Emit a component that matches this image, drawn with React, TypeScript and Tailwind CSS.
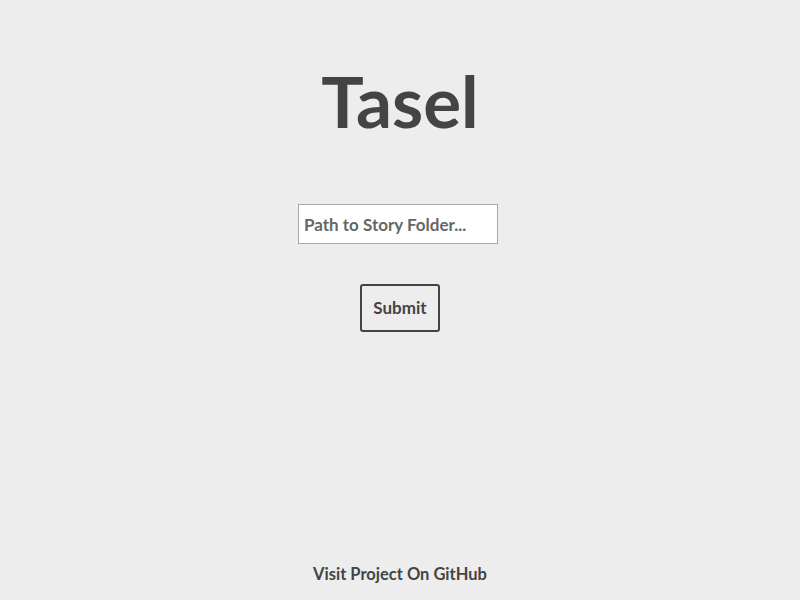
export default function App() {
  return (
    <div
      className="min-h-screen bg-[#ededed] text-[#444444] flex flex-col items-center"
      style={{ fontFamily: "Lato, 'Noto Sans', sans-serif" }}
    >
      {/* Title */}
      <h1 className="mt-[56px] text-[71px] leading-[90px] font-bold">Tasel</h1>

      {/* Form */}
      <form className="mt-[58px] flex flex-col items-center" onSubmit={(e) => e.preventDefault()}>
        <input
          type="text"
          placeholder="Path to Story Folder..."
          className="mr-[4px] w-[200px] h-[40px] bg-white border border-[#aaaaaa] px-[5px] text-[17px] font-bold text-[#444444] placeholder:text-[#666666] outline-none"
        />
        <button
          type="submit"
          className="mt-[40px] w-[80px] h-[48px] border-2 border-[#444444] rounded-[3px] text-[17px] font-bold text-[#444444]"
        >
          Submit
        </button>
      </form>

      {/* Footer */}
      <footer className="mt-auto pb-[14px]">
        <a href="#" className="text-[16.5px] font-bold text-[#444444] leading-[20px]">
          Visit Project On GitHub
        </a>
      </footer>
    </div>
  )
}
